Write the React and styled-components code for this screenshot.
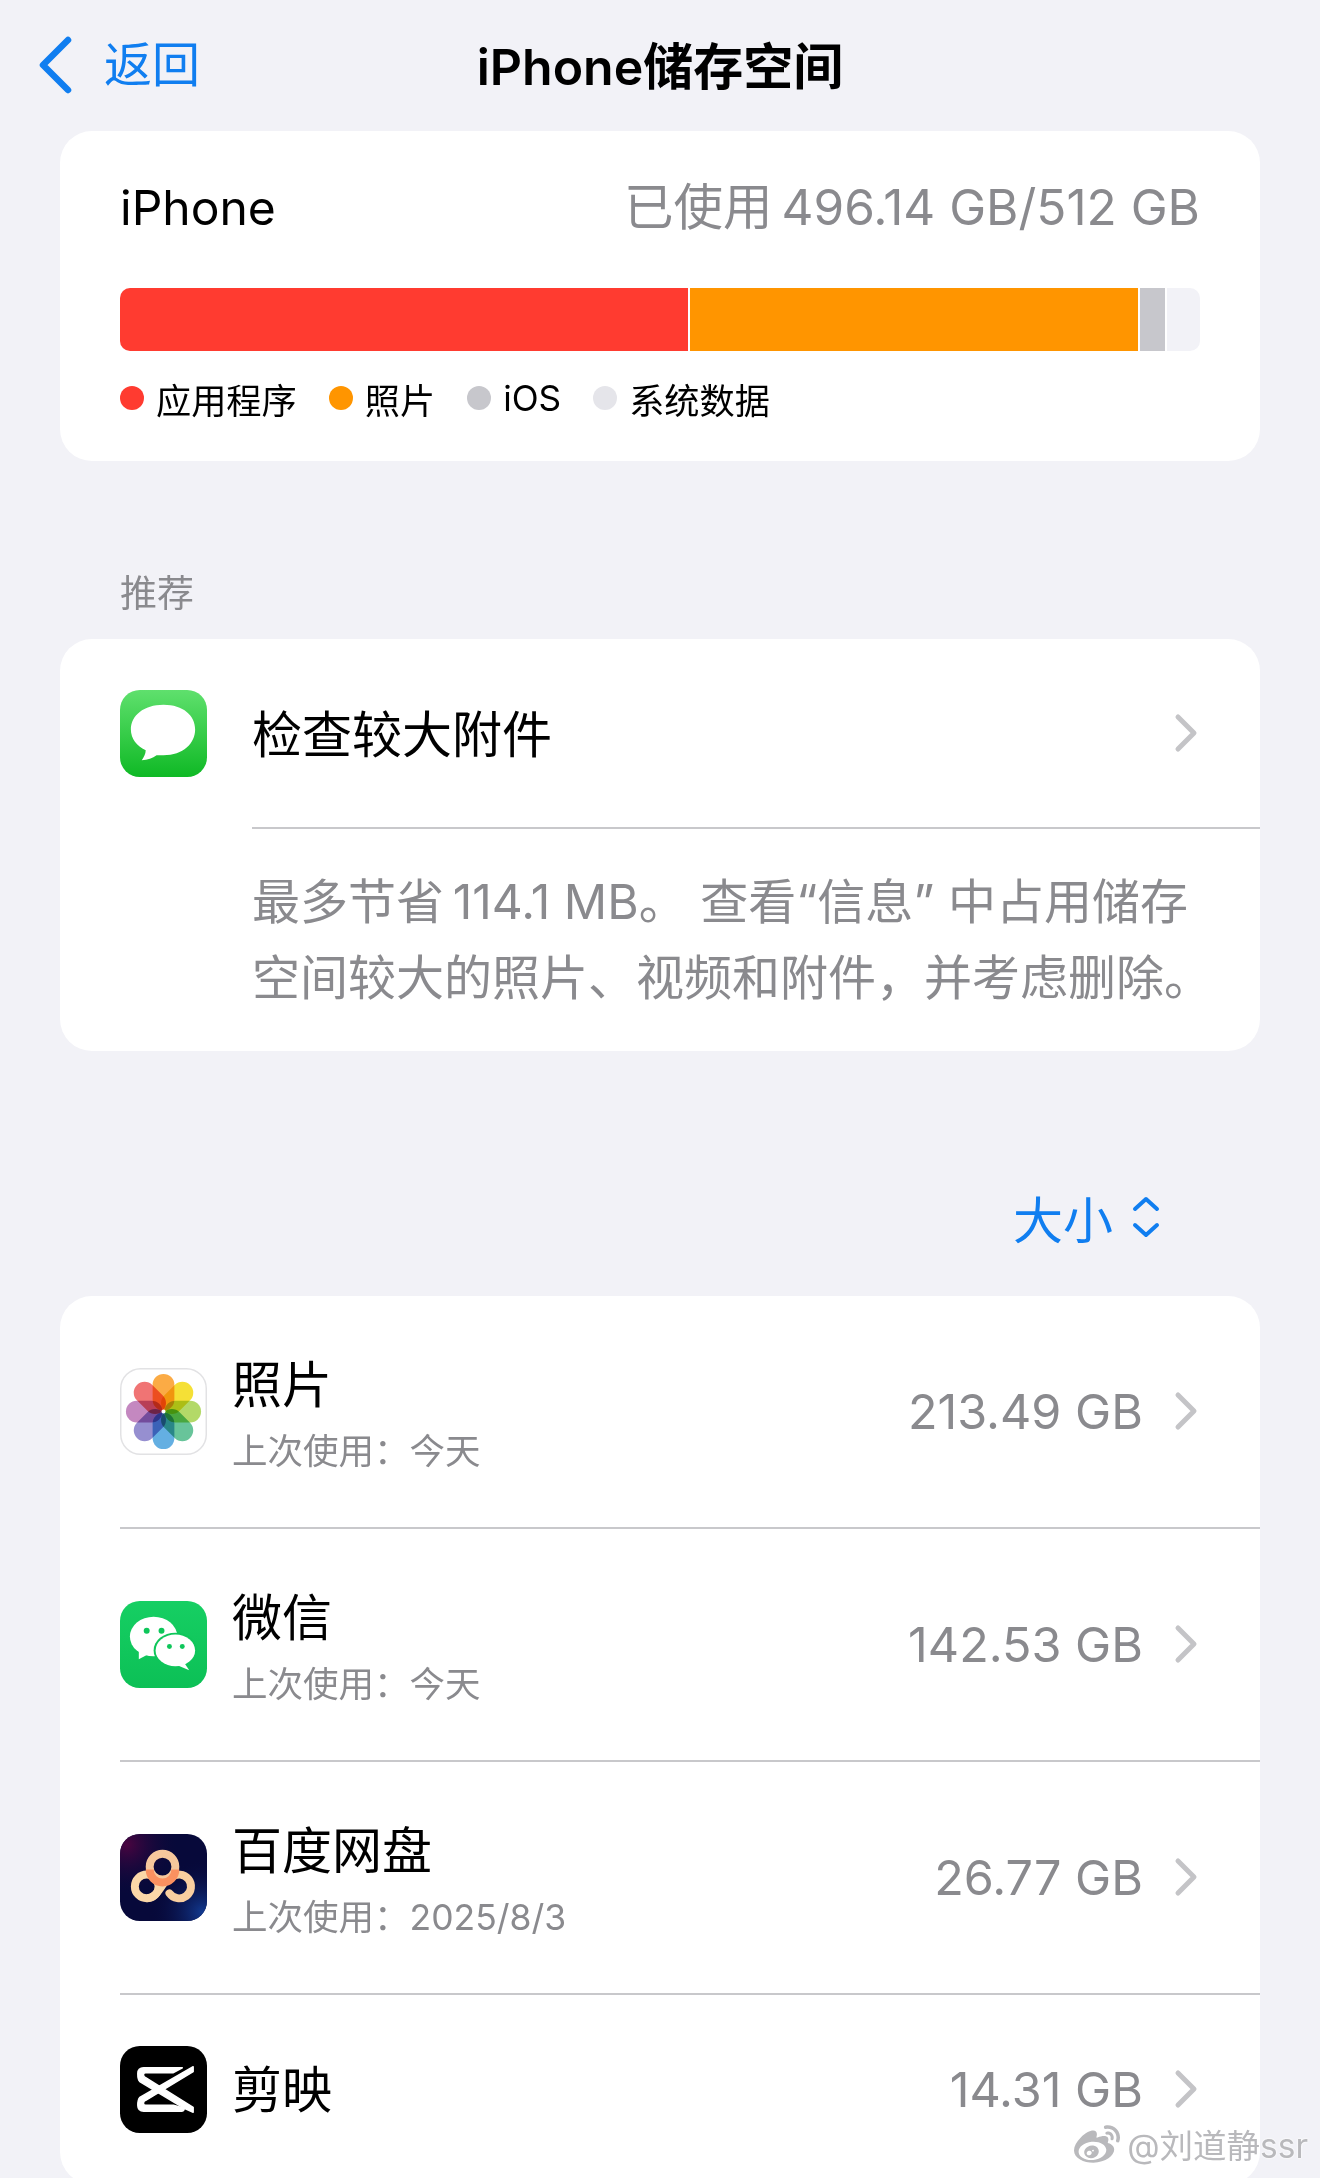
import React from 'react'
import styled, { createGlobalStyle } from 'styled-components'
import { SiSinaweibo } from 'react-icons/si'

const GlobalStyle = createGlobalStyle`
  html, body { margin: 0; padding: 0; background: #f2f2f7; }
  body { font-family: Inter, "Noto Sans CJK SC", sans-serif; }
`

const Page = styled.div`
  position: relative;
  width: 1320px;
  height: 2178px;
  overflow: hidden;
  background: #f2f2f7;
  padding: 0 60px;
  box-sizing: border-box;
`

const Nav = styled.div`
  position: relative;
  height: 131px;
  margin: 0 -60px;
  display: flex;
  align-items: center;
  justify-content: center;
`

const Back = styled.div`
  position: absolute;
  left: 37px;
  top: 36px;
  display: flex;
  align-items: center;
  gap: 31px;
  color: #107ef0;
  font-size: 48px;
  line-height: 58px;
`

const Title = styled.div`
  font-size: 50px;
  font-weight: 600;
  color: #000;
  margin-top: -6px;
`

const Card = styled.div`
  background: #fff;
  border-radius: 32px;
`

const StorageCard = styled(Card)`
  height: 330px;
  padding: 0 60px;
  box-sizing: border-box;
`

const StorageHead = styled.div`
  height: 157px;
  padding-top: 46px;
  box-sizing: border-box;
  display: flex;
  align-items: baseline;
  justify-content: space-between;
  line-height: 60px;
`

const DeviceName = styled.span`
  font-size: 48px;
  color: #000;
`

const Used = styled.span`
  font-size: 49.5px;
  color: #8a8a8e;
`

const UsedValue = styled.span`
  margin-left: 9px;
`

const Bar = styled.div`
  display: flex;
  height: 63px;
  border-radius: 10px;
  overflow: hidden;
  background: #f2f2f7;
`

const Segment = styled.div`
  width: ${p => p.$w}px;
  flex: none;
  box-sizing: content-box;
  background: ${p => p.$c};
  border-right: 2px solid #fff;
`

const Legend = styled.div`
  display: flex;
  align-items: center;
  height: 94px;
  gap: 32px;
`

const LegendItem = styled.div`
  display: flex;
  align-items: center;
  gap: 12px;
  font-size: 35.2px;
  color: #000;
`

const Dot = styled.span`
  width: 24px;
  height: 24px;
  border-radius: 50%;
  background: ${p => p.$c};
`

const SectionLabel = styled.div`
  height: 178px;
  display: flex;
  align-items: flex-end;
  padding: 0 0 21px 60px;
  box-sizing: border-box;
  font-size: 37px;
  color: #8a8a8e;
`

const AttachRow = styled.div`
  height: 188px;
  display: flex;
  align-items: center;
  padding: 0 62px 0 60px;
`

const AttachTitle = styled.div`
  flex: 1;
  margin-left: 45px;
  padding-bottom: 5px;
  font-size: 50px;
  color: #000;
`

const AppIcon = styled.div`
  width: 87px;
  height: 87px;
  flex: none;
  display: flex;
  svg { display: block; }
`

const Divider = styled.div`
  height: 1.5px;
  background: #c8c8cb;
  margin-left: ${p => p.$left}px;
`

const Description = styled.div`
  padding: 35px 0 35px 192px;
  font-size: 48px;
  line-height: 76px;
  color: #8a8a8e;
  white-space: nowrap;
`

const SortRow = styled.div`
  height: 245px;
  display: flex;
  align-items: center;
  justify-content: flex-end;
  gap: 18px;
  padding: 87px 99px 0 0;
  box-sizing: border-box;
  color: #107ef0;
  font-size: 50px;
`

const AppRow = styled.div`
  height: ${p => p.$h}px;
  display: flex;
  align-items: center;
  padding: 0 62px 0 60px;
  box-sizing: border-box;
`

const AppText = styled.div`
  flex: 1;
  min-width: 0;
  margin-left: 25px;
  padding-top: ${p => (p.$single ? 2 : 6)}px;
`

const AppName = styled.div`
  font-size: 50px;
  line-height: 60px;
  color: #000;
`

const LastUsed = styled.div`
  margin-top: 15px;
  font-size: 35.5px;
  line-height: 44px;
  color: #8a8a8e;
`

const AppSize = styled.div`
  font-size: 48.5px;
  color: #8a8a8e;
  margin-right: 31px;
`

const Watermark = styled.div`
  position: absolute;
  right: 12px;
  bottom: 10px;
  display: flex;
  align-items: center;
  gap: 7px;
  font-size: 33.5px;
  color: #b9b9bc;
  text-shadow: 0 0 2px #fff, 0 0 3px #fff;
  svg { filter: drop-shadow(0 0 1px #fff); }
`

const Chevron = () => (
  <svg width="24" height="40" viewBox="0 0 24 40">
    <path d="M4 4 L20 20 L4 36" fill="none" stroke="#c4c4c7" strokeWidth="5" strokeLinecap="round" strokeLinejoin="round" />
  </svg>
)

const BackArrow = () => (
  <svg width="36" height="58" viewBox="0 0 36 58">
    <path d="M31 4 L6 29 L31 54" fill="none" stroke="#107ef0" strokeWidth="6.5" strokeLinecap="round" strokeLinejoin="round" />
  </svg>
)

const SortIcon = () => (
  <svg width="30" height="44" viewBox="0 0 30 44">
    <path d="M4 14 L15 4 L26 14 M4 30 L15 40 L26 30" fill="none" stroke="#107ef0" strokeWidth="4" strokeLinecap="round" strokeLinejoin="round" />
  </svg>
)

const MessagesIcon = () => (
  <svg width="87" height="87" viewBox="0 0 88 88">
    <defs>
      <linearGradient id="msg" x1="0" y1="0" x2="0" y2="1">
        <stop offset="0" stopColor="#5fe06d" />
        <stop offset="1" stopColor="#0fb925" />
      </linearGradient>
    </defs>
    <rect width="88" height="88" rx="20" fill="url(#msg)" />
    <path d="M44 15 C24 15 11 26 11 40 C11 49 17 57 26 61 C26 65 24 68 22 71 C28 71 33 69 37 66 C39 66 42 66 44 66 C64 66 76 54 76 40 C76 26 64 15 44 15 Z" fill="#fff" />
  </svg>
)

const petals = [
  ['#fbab45', 0], ['#f5e036', 45], ['#b3d968', 90], ['#68c49a', 135],
  ['#64afe2', 180], ['#968fd0', 225], ['#c488c0', 270], ['#f07474', 315],
]

const PhotosIcon = () => (
  <svg width="87" height="87" viewBox="0 0 88 88">
    <rect x="0.75" y="0.75" width="86.5" height="86.5" rx="20" fill="#fff" stroke="#e2e2e4" strokeWidth="1.5" />
    <g style={{ isolation: 'isolate' }}>
      {petals.map(([color, angle]) => (
        <rect
          key={angle}
          x="33"
          y="6"
          width="22"
          height="37"
          rx="11"
          fill={color}
          style={{ mixBlendMode: 'multiply' }}
          transform={`rotate(${angle} 44 44)`}
        />
      ))}
    </g>
    <circle cx="44" cy="44" r="2" fill="#fff" />
  </svg>
)

const WechatIcon = () => (
  <svg width="87" height="87" viewBox="0 0 88 88">
    <defs>
      <linearGradient id="wx" x1="0" y1="0" x2="0" y2="1">
        <stop offset="0" stopColor="#16cf63" />
        <stop offset="1" stopColor="#0cc056" />
      </linearGradient>
    </defs>
    <rect width="88" height="88" rx="20" fill="url(#wx)" />
    <ellipse cx="34" cy="36" rx="24" ry="20" fill="#fff" />
    <path d="M19 48 L19 59 L30 53 Z" fill="#fff" />
    <ellipse cx="56" cy="50" rx="22" ry="18" fill="#0ec65a" />
    <ellipse cx="56" cy="50" rx="20" ry="16" fill="#fff" />
    <path d="M64 61 L70 70 L58 65 Z" fill="#fff" />
    <circle cx="27" cy="30" r="3" fill="#0ec65a" />
    <circle cx="42" cy="30" r="3" fill="#0ec65a" />
    <circle cx="50" cy="46" r="2.5" fill="#0ec65a" />
    <circle cx="63" cy="46" r="2.5" fill="#0ec65a" />
  </svg>
)

const BaiduIcon = () => (
  <svg width="87" height="87" viewBox="0 0 88 88">
    <defs>
      <radialGradient id="bd1" cx="0.08" cy="0.12" r="0.6">
        <stop offset="0" stopColor="#4a0440" />
        <stop offset="1" stopColor="#07093a" stopOpacity="0" />
      </radialGradient>
      <radialGradient id="bd2" cx="0.95" cy="0.9" r="0.6">
        <stop offset="0" stopColor="#123a90" />
        <stop offset="1" stopColor="#07093a" stopOpacity="0" />
      </radialGradient>
    </defs>
    <rect width="88" height="88" rx="20" fill="#07093a" />
    <rect width="88" height="88" rx="20" fill="url(#bd1)" />
    <rect width="88" height="88" rx="20" fill="url(#bd2)" />
    <circle cx="27" cy="53" r="12" fill="none" stroke="#fbd7a8" strokeWidth="8" />
    <path d="M27 65 C38 65 40 52 50 44" fill="none" stroke="#fbd7a8" strokeWidth="8" />
    <path d="M50 60 A12 12 0 1 0 52 44" fill="none" stroke="#f9cfa0" strokeWidth="8" strokeLinecap="round" />
    <circle cx="43" cy="33" r="13" fill="none" stroke="#f6c79c" strokeWidth="8" />
    <path d="M30 36 A13 13 0 0 0 56 36" fill="none" stroke="#fb9160" strokeWidth="8" />
  </svg>
)

const CapcutIcon = () => (
  <svg width="87" height="87" viewBox="0 0 88 88">
    <rect width="88" height="88" rx="20" fill="#000" />
    <path d="M18 28 C18 24 20 22 24 22 L63 22 L54 27 L26 27 C23 27 23 31 26 32 L74 62 L74 67 L65 63 L20 36 C18 34 18 32 18 28 Z" fill="#fff" stroke="#fff" strokeWidth="1.5" strokeLinejoin="round" />
    <path d="M18 60 C18 64 20 66 24 66 L62 66 C64 66 65 65 65 63 L54 60 L26 60 C23 60 23 56 26 55 L74 26 L74 21 L20 52 C18 54 18 56 18 60 Z" fill="#fff" stroke="#fff" strokeWidth="1.5" strokeLinejoin="round" />
  </svg>
)

const apps = [
  { name: '照片', used: '上次使用：今天', size: '213.49 GB', icon: <PhotosIcon />, h: 231.5 },
  { name: '微信', used: '上次使用：今天', size: '142.53 GB', icon: <WechatIcon />, h: 231.5 },
  { name: '百度网盘', used: '上次使用：2025/8/3', size: '26.77 GB', icon: <BaiduIcon />, h: 231.5 },
  { name: '剪映', size: '14.31 GB', icon: <CapcutIcon />, h: 189 },
]

const legend = [
  ['#ff3b30', '应用程序'],
  ['#ff9500', '照片'],
  ['#c7c7cc', 'iOS'],
  ['#e5e5ea', '系统数据'],
]

const App = () => {
  return (
    <Page>
      <GlobalStyle />
      <Nav>
        <Back>
          <BackArrow />
          返回
        </Back>
        <Title>iPhone储存空间</Title>
      </Nav>

      <StorageCard>
        <StorageHead>
          <DeviceName>iPhone</DeviceName>
          <Used>已使用<UsedValue>496.14 GB/512 GB</UsedValue></Used>
        </StorageHead>
        <Bar>
          <Segment $w={568} $c="#ff3b30" />
          <Segment $w={448} $c="#ff9500" />
          <Segment $w={25} $c="#c7c7cc" />
        </Bar>
        <Legend>
          {legend.map(([color, label]) => (
            <LegendItem key={label}>
              <Dot $c={color} />
              {label}
            </LegendItem>
          ))}
        </Legend>
      </StorageCard>

      <SectionLabel>推荐</SectionLabel>

      <Card>
        <AttachRow>
          <AppIcon><MessagesIcon /></AppIcon>
          <AttachTitle>检查较大附件</AttachTitle>
          <Chevron />
        </AttachRow>
        <Divider $left={192} />
        <Description>
          {'最多节省\u2009114.1 MB。 查看“信息” 中占用储存'}
          <br />
          空间较大的照片、视频和附件，并考虑删除。
        </Description>
      </Card>

      <SortRow>
        大小
        <SortIcon />
      </SortRow>

      <Card>
        {apps.map((app, i) => (
          <React.Fragment key={app.name}>
            {i > 0 && <Divider $left={60} />}
            <AppRow $h={app.h}>
              <AppIcon>{app.icon}</AppIcon>
              <AppText $single={!app.used}>
                <AppName>{app.name}</AppName>
                {app.used && <LastUsed>{app.used}</LastUsed>}
              </AppText>
              <AppSize>{app.size}</AppSize>
              <Chevron />
            </AppRow>
          </React.Fragment>
        ))}
      </Card>

      <Watermark>
        <SiSinaweibo size={46} />
        @刘道静ssr
      </Watermark>
    </Page>
  )
}

export default App
